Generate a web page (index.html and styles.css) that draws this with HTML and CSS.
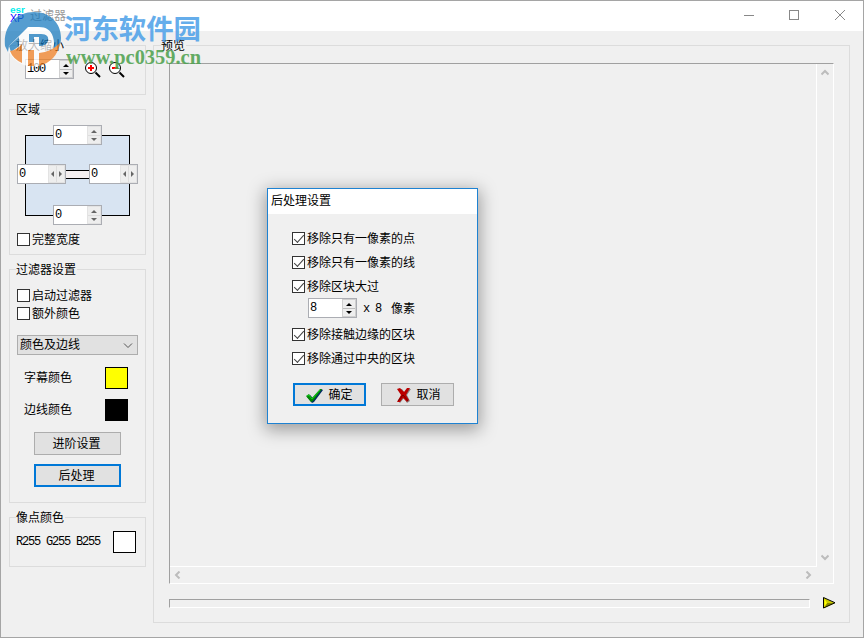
FILE: index.html
```html
<!DOCTYPE html>
<html lang="zh-CN">
<head>
    <meta charset="UTF-8">
    <title>过滤器</title>
    <link rel="stylesheet" href="styles.css">
</head>
<body>
<div class="window">
    <div class="titlebar">
        <svg class="app-icon" width="16" height="16" viewBox="0 0 16 16">
            <text class="esr" x="0" y="6" font-size="9" fill="#0ee" textLength="15" lengthAdjust="spacingAndGlyphs">esr</text>
            <text x="0" y="15" font-size="11" fill="#00f" textLength="14" lengthAdjust="spacingAndGlyphs">XP</text>
        </svg>
        <span class="caption">过滤器</span>
        <svg class="controls" width="120" height="30" viewBox="0 0 120 30" fill="none" stroke="#888" shape-rendering="crispEdges">
            <path d="M8 14.5h10M53.5 9.5h9v9h-9z"/>
            <path d="M99 9l10 10M109 9l-10 10" shape-rendering="auto"/>
        </svg>
    </div>
    <div class="content">
        <div class="sidebar">
            <div class="group zoom">
                <div class="legend">放大缩小</div>
                <div class="zoom-row">
                    <div class="spin"><span>100</span><i class="updown"></i></div>
                    <svg class="lens" width="16" height="16" viewBox="0 0 16 16" fill="none">
                        <path d="M10.5 10.5l4.500 4.500" stroke="#000" stroke-width="2"/>
                        <circle cx="6" cy="6" r="5.500" fill="#fff" stroke="#000"/>
                        <path d="M3 6h6M6 3v6" stroke="#f00" stroke-width="2"/>
                    </svg>
                    <svg class="lens" width="16" height="16" viewBox="0 0 16 16" fill="none">
                        <path d="M10.5 10.5l4.500 4.500" stroke="#000" stroke-width="2"/>
                        <circle cx="6" cy="6" r="5.500" fill="#fff" stroke="#000"/>
                        <path d="M3 6h6" stroke="#f00" stroke-width="2"/>
                    </svg>
                </div>
            </div>
            <div class="group area">
                <div class="legend">区域</div>
                <div class="diagram">
                    <div class="bridge"></div>
                    <div class="spin off top"><span>0</span><i class="updown"></i></div>
                    <div class="spin off left"><span>0</span><i class="sideways"></i></div>
                    <div class="spin off right"><span>0</span><i class="sideways"></i></div>
                    <div class="spin off bottom"><span>0</span><i class="updown"></i></div>
                </div>
                <div class="check"><i></i>完整宽度</div>
            </div>
            <div class="group filter">
                <div class="legend">过滤器设置</div>
                <div class="check first"><i></i>启动过滤器</div>
                <div class="check"><i></i>额外颜色</div>
                <div class="select">
                    颜色及边线
                    <svg width="10" height="6" viewBox="0 0 10 6" fill="none" stroke="#555"><path d="M1 .5l4 4 4-4"/></svg>
                </div>
                <div class="color-row">字幕颜色<b class="swatch yellow"></b></div>
                <div class="color-row">边线颜色<b class="swatch black"></b></div>
                <div class="button">进阶设置</div>
                <div class="button active">后处理</div>
            </div>
            <div class="group pixel">
                <div class="legend">像点颜色</div>
                <div class="pixel-row">R255 G255 B255<b class="swatch"></b></div>
            </div>
        </div>
        <div class="group preview">
            <div class="legend">预览</div>
            <div class="viewport">
                <div class="canvas"></div>
                <div class="vbar">
                    <svg width="8" height="7" viewBox="0 0 8 7"><path d="M0.5 5.5l3.500-3.500 3.500 3.500"/></svg>
                    <svg width="8" height="7" viewBox="0 0 8 7"><path d="M0.5 1.5l3.500 3.500 3.500-3.500"/></svg>
                </div>
                <div class="hbar">
                    <svg width="7" height="8" viewBox="0 0 7 8"><path d="M5.500 .5l-3.500 3.500 3.500 3.500"/></svg>
                    <svg width="7" height="8" viewBox="0 0 7 8"><path d="M1.500 .5l3.500 3.500-3.500 3.500"/></svg>
                </div>
            </div>
            <div class="player">
                <div class="track"></div>
                <svg width="13" height="12" viewBox="0 0 13 12">
                    <path d="M.5 .5v11l11.500-5.500z" fill="#cc0"/>
                    <path d="M2 10l2-4h7z" fill="#880"/>
                    <path d="M1.500 2v7l2.500-3z" fill="#ff0"/>
                    <path d="M.5 .5v10.500l11.500-5.250z" fill="none" stroke="#000"/>
                </svg>
            </div>
        </div>
    </div>
</div>

<svg class="watermark" width="210" height="75" viewBox="0 0 210 75">
    <g opacity=".72">
        <circle cx="33" cy="39" r="27.500" fill="#fff"/>
        <path d="M5 46C3 26 16 12 34 12c16 0 27 11 27 26 0 8-4 14-10 19 3-7 4-14 2-20-2-7-7-10-14-10H28L9 46l-1 6z" fill="#1478be"/>
        <path d="M29 34h12c6 0 8 3 7 7-1 3-4 5-9 5v-9h-5v5h-5zM9 46l10-9v9l-8 6z" fill="#1478be"/>
        <path d="M10 51q7-1 12-7v19q-9-4-12-12zM28 50h6v16h-6zM39 53q12-1 21-10-3 18-21 23z" fill="#f07d1e"/>
    </g>
    <text class="wm-name" x="64" y="39" textLength="137" lengthAdjust="spacingAndGlyphs">河东软件园</text>
    <text class="wm-url" x="66" y="64" textLength="135" lengthAdjust="spacingAndGlyphs">www.pc0359.cn</text>
</svg>

<div class="dialog">
    <div class="dialog-title">后处理设置</div>
    <div class="dialog-body">
        <div class="check on"><i></i>移除只有一像素的点</div>
        <div class="check on"><i></i>移除只有一像素的线</div>
        <div class="check on"><i></i>移除区块大过</div>
        <div class="size-row">
            <div class="spin"><span>8</span><i class="updown"></i></div>
            <span class="unit">x 8</span><span class="unit-name">像素</span>
        </div>
        <div class="check on"><i></i>移除接触边缘的区块</div>
        <div class="check on"><i></i>移除通过中央的区块</div>
        <div class="buttons">
            <div class="button active">
                <svg width="17" height="16" viewBox="0 0 17 16">
                    <path d="M1 9l3-2 3 3 8-9 2 1-9 12-2 1z" fill="#002c60"/>
                    <path d="M0 8l3-2 3 4 8-9 2 0-9 12-2 1z" fill="#080"/>
                    <path d="M1 8l2-1 3 4 8-9" fill="none" stroke="#1c2"/>
                </svg>
                确定
            </div>
            <div class="button">
                <svg width="14" height="15" viewBox="0 0 14 15">
                    <path d="M1 1h4l3 4 3-4h3l-4 6 3 6-3 2-3-5-4 5-2-2 4-6z" fill="#888"/>
                    <path d="M0 1l3-1 4 4 3-4h3l-4 7 3 5-2 2-4-4-3 4H0l4-7z" fill="#b00"/>
                    <path d="M6 7l5 6M6 7l-5 6" stroke="#700"/>
                </svg>
                取消
            </div>
        </div>
    </div>
</div>
</body>
</html>
```
FILE: styles.css
```css
* {
    box-sizing: border-box;
}

body {
    margin: 0;
    width: 864px;
    height: 638px;
    overflow: hidden;
    position: relative;
    background-color: #f0f0f0;
    color: #000;
    font: 12px/14px "Liberation Mono", "Noto Sans CJK SC", monospace;
    white-space: nowrap;
}

svg {
    display: block;
    flex: none;
}

.window {
    height: 638px;
    border: 1px solid #a5a5a5;
}

.titlebar {
    height: 30px;
    display: flex;
    background-color: #fff;
}

.app-icon {
    margin: 6px 4px 0 9px;
    font-family: "Liberation Sans", sans-serif;
    overflow: visible;
}

.esr {
    font-weight: bold;
}

.caption {
    margin-top: 9px;
    color: #999;
}

.controls {
    margin-left: auto;
    margin-right: 7px;
}

.content {
    display: flex;
    gap: 7px;
    padding: 14px 0 0 8px;
}

.sidebar {
    width: 137px;
    display: flex;
    flex-direction: column;
    gap: 14px;
}

.group {
    border: 1px solid #dcdcdc;
    padding-left: 7px;
}

.legend {
    width: max-content;
    height: 14px;
    line-height: 18px;
    margin-top: -8px;
    margin-left: -1px;
    padding-right: 1px;
    background-color: #f0f0f0;
}

.zoom {
    height: 50px;
}

.area {
    height: 146px;
}

.filter {
    height: 234px;
}

.pixel {
    height: 50px;
}

.preview {
    width: 697px;
    height: 578px;
    padding-left: 15px;
}

.preview .legend {
    margin-left: -8px;
}

.zoom-row {
    display: flex;
    padding: 7px 0 0 8px;
}

.lens {
    margin: 3px 0 0 11px;
}

.lens + .lens {
    margin-left: 8px;
}

/* number fields */
.spin {
    width: 49px;
    height: 20px;
    display: flex;
    justify-content: space-between;
    border: 1px solid #abadb3;
    background-color: #fff;
    flex: none;
}

.spin span {
    padding: 2px 0 0 1px;
    letter-spacing: -1.2px;
}

.spin i {
    width: 14px;
    position: relative;
    border: 1px solid #d0d0d0;
    background: linear-gradient(#bbb, #bbb) center / 100% 1px no-repeat #eee;
}

.spin i::before,
.spin i::after {
    content: "";
    position: absolute;
    left: 3px;
    border: 3px solid transparent;
}

.updown::before {
    top: 0;
    border-top-width: 0 !important;
    border-bottom-color: #000 !important;
    margin-top: 3px;
}

.updown::after {
    bottom: 2px;
    border-bottom-width: 0 !important;
    border-top-color: #000 !important;
}

.off .updown::before {
    border-bottom-color: #666 !important;
}

.off .updown::after {
    border-top-color: #666 !important;
}

.off i {
    border-color: #e3e3e3;
    background-image: linear-gradient(#ddd, #ddd);
}

.spin .sideways {
    width: 17px;
    background-size: 1px 100%;
}

.spin .sideways::before {
    left: 2px;
    top: 5px;
    border-left-width: 0;
    border-right-color: #666;
}

.spin .sideways::after {
    left: 10px;
    top: 5px;
    border-right-width: 0;
    border-left-color: #666;
}

.diagram {
    position: relative;
    width: 105px;
    height: 81px;
    margin: 19px 0 17px 8px;
    border: 1px solid #000;
    background-color: #d8e4f2;
}

.diagram .spin,
.bridge {
    position: absolute;
}

.bridge {
    left: 40px;
    top: 34px;
    width: 24px;
    height: 9px;
    border: solid #000;
    border-width: 1px 0;
    background-color: #f4eff0;
}

.top {
    left: 27px;
    top: -11px;
}

.bottom {
    left: 27px;
    top: 69px;
}

.left {
    left: -9px;
    top: 28px;
}

.right {
    left: 63px;
    top: 28px;
}

.check {
    display: flex;
    align-items: flex-start;
    height: 14px;
    line-height: 17px;
    gap: 2px;
}

.check i {
    width: 13px;
    height: 13px;
    border: 1px solid #333;
    background-color: #fff;
}

.check.on i::after {
    content: "";
    display: block;
    width: 9px;
    height: 4px;
    margin: 2px 0 0 1px;
    border: solid #444;
    border-width: 0 0 1.5px 1.5px;
    transform: rotate(-48deg);
}

.check.first {
    margin: 13px 0 4px;
}

.select {
    width: 121px;
    height: 20px;
    margin-top: 14px;
    padding: 2px 4px 0 2px;
    display: flex;
    align-items: center;
    justify-content: space-between;
    border: 1px solid #adadad;
    background-color: #e1e1e1;
}

.color-row {
    display: flex;
    justify-content: space-between;
    height: 22px;
    line-height: 24px;
    margin: 12px 17px 0 7px;
}

.color-row + .color-row {
    margin-top: 10px;
}

.swatch {
    width: 23px;
    height: 22px;
    border: 1px solid #000;
    background-color: #fff;
}

.yellow {
    background-color: #ff0;
}

.black {
    background-color: #000;
}

.button {
    width: 87px;
    height: 23px;
    padding: 2px 2px 0 0;
    display: flex;
    align-items: center;
    justify-content: center;
    border: 1px solid #adadad;
    background-color: #e1e1e1;
}

.button.active {
    border: 2px solid #0078d7;
}

.filter .button {
    margin: 11px 0 0 17px;
}

.filter .button.active {
    margin-top: 9px;
}

.pixel-row {
    display: flex;
    align-items: center;
    justify-content: space-between;
    margin: 7px 9px 0 -1px;
    letter-spacing: -1.2px;
}

/* preview pane with its scrollbars */
.viewport {
    width: 665px;
    height: 521px;
    margin-top: 11px;
    display: grid;
    grid-template-columns: 647px 16px;
    grid-template-rows: 503px 16px;
    border: 1px solid #fff;
    border-top-color: #a0a0a0;
    border-left-color: #a0a0a0;
}

.viewport svg {
    fill: none;
    stroke: #bcbcbc;
    stroke-width: 2;
}

.canvas {
    border: solid #fff;
    border-width: 0 1px 1px 0;
}

.vbar {
    display: flex;
    flex-direction: column;
    align-items: center;
    justify-content: space-between;
    padding: 5px 1px 6px 0;
}

.hbar {
    display: flex;
    align-items: center;
    justify-content: space-between;
    padding: 0 5px 1px 4px;
}

.player {
    display: flex;
    gap: 13px;
    margin-top: 13px;
}

.track {
    width: 641px;
    height: 9px;
    margin-top: 2px;
    border: 1px solid #fff;
    border-top-color: #a0a0a0;
    border-left-color: #a0a0a0;
}

.watermark {
    position: absolute;
    left: 0;
    top: 0;
}

.wm-name {
    font: bold 27px "Noto Sans CJK SC", sans-serif;
    fill: #4b9fe8;
    opacity: .85;
}

.wm-url {
    font: bold 20px "Liberation Serif", serif;
    fill: #4ba04b;
    opacity: .85;
}

.dialog {
    position: absolute;
    left: 267px;
    top: 188px;
    width: 211px;
    height: 236px;
    border: 1px solid #1e82d2;
    background-color: #f0f0f0;
    box-shadow: 0 4px 16px 2px rgba(0, 0, 0, .35);
}

.dialog-title {
    height: 25px;
    padding: 6px 0 0 3px;
    background-color: #fff;
}

.dialog-body {
    padding: 18px 0 0 24px;
}

.dialog .check {
    margin-bottom: 10px;
}

.size-row {
    display: flex;
    align-items: center;
    margin: -6px 0 10px 16px;
}

.unit {
    margin: 2px 10px 0 6px;
    letter-spacing: -1.2px;
}

.unit-name {
    margin-top: 3px;
}

.buttons {
    display: flex;
    gap: 15px;
    margin: 17px 0 0 1px;
}

.dialog .button {
    width: 73px;
    padding-right: 0;
    gap: 5px;
}

.dialog .button:last-child {
    padding-left: 3px;
}
```
